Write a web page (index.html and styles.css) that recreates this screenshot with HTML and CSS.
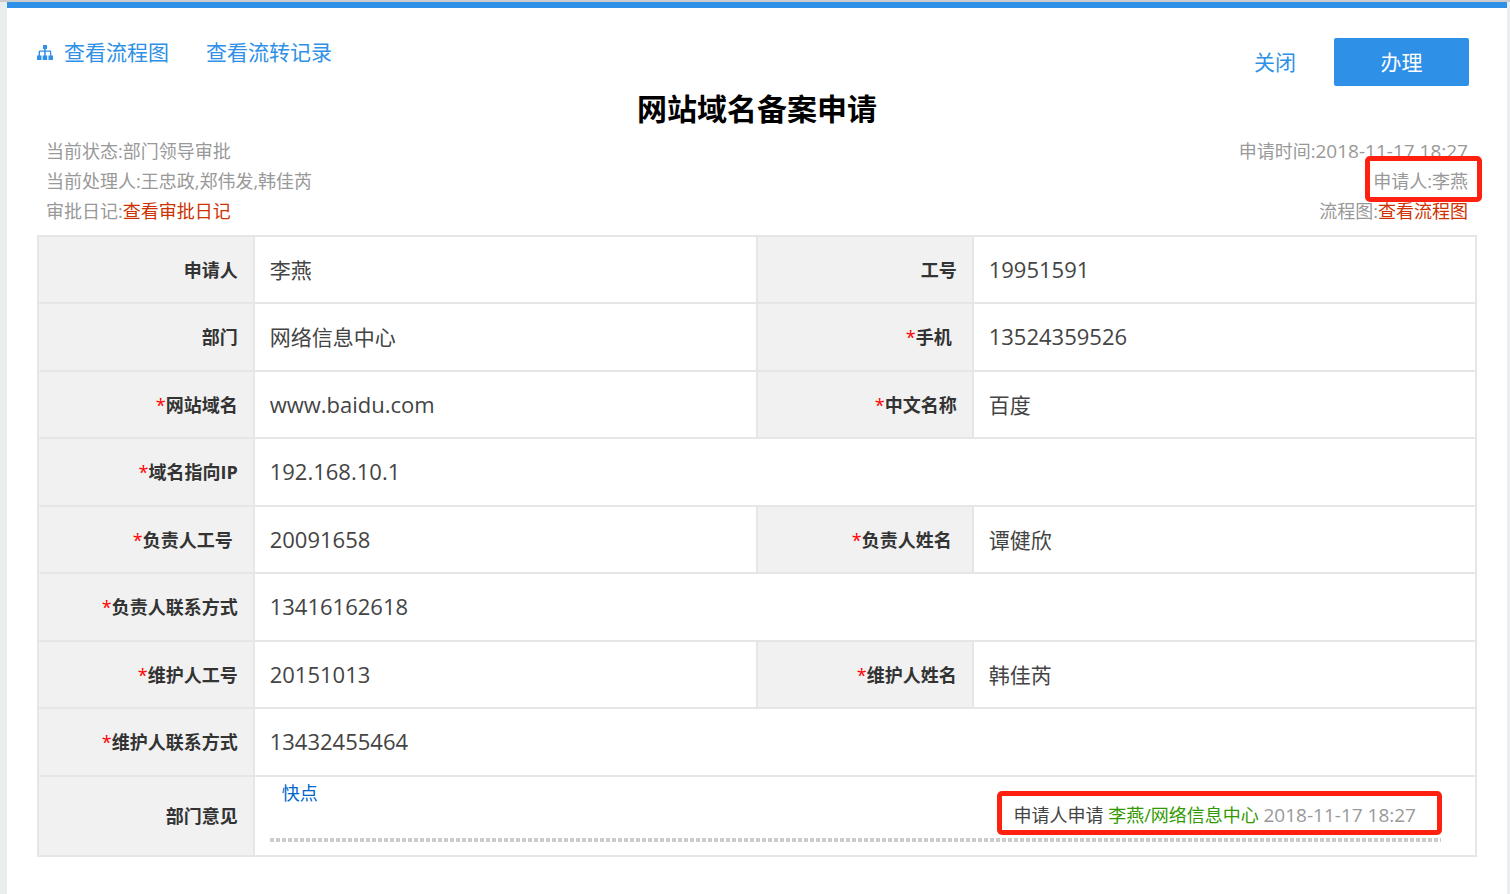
FILE: index.html
```html
<!DOCTYPE html>
<html lang="zh-CN">
<head>
<meta charset="utf-8">
<title>网站域名备案申请</title>
<link rel="stylesheet" href="styles.css">
</head>
<body>
<main class="page">
  <header class="toolbar">
    <nav class="links">
      <a class="link" href="#chart"><svg class="icon" viewBox="0 0 16 16" width="16" height="16" fill="currentColor" aria-hidden="true"><path d="M6 1h4v4H8.700v1.500H13q1.300 0 1.300 1.300V11.500H16V16h-4.500v-4.500h1.500V7.800H8.700v3.700h1.500V16H5.700v-4.500h1.500V7.800H3v3.700h1.500V16H0v-4.500h1.600V7.800q0-1.300 1.400-1.300h4.200V5H6z"/></svg>查看流程图</a>
      <a class="link" href="#records">查看流转记录</a>
    </nav>
    <div class="actions">
      <a class="link" href="#close">关闭</a>
      <button class="primary" type="button">办理</button>
    </div>
  </header>
  <h1 class="title">网站域名备案申请</h1>
  <section class="meta">
    <div>
      <p class="meta-line">当前状态:部门领导审批</p>
      <p class="meta-line">当前处理人:王忠政,郑伟发,韩佳芮</p>
      <p class="meta-line">审批日记:<a class="red-link" href="#log">查看审批日记</a></p>
    </div>
    <div class="meta-right">
      <p class="meta-line">申请时间:<time class="date">2018-11-17 18:27</time></p>
      <p class="meta-line"><span class="marked marked-small">申请人:李燕</span></p>
      <p class="meta-line">流程图:<a class="red-link" href="#flow">查看流程图</a></p>
    </div>
  </section>
  <table class="form">
    <colgroup><col class="col-label"><col class="col-value"><col class="col-label"><col class="col-value"></colgroup>
    <tbody>
      <tr><th scope="row">申请人</th><td>李燕</td><th scope="row">工号</th><td class="latin">19951591</td></tr>
      <tr><th scope="row">部门</th><td>网络信息中心</td><th scope="row" class="spaced"><i class="req">*</i>手机</th><td class="latin">13524359526</td></tr>
      <tr><th scope="row"><i class="req">*</i>网站域名</th><td class="latin">www.baidu.com</td><th scope="row"><i class="req">*</i>中文名称</th><td>百度</td></tr>
      <tr><th scope="row"><i class="req">*</i>域名指向IP</th><td class="latin" colspan="3">192.168.10.1</td></tr>
      <tr><th scope="row" class="spaced"><i class="req">*</i>负责人工号</th><td class="latin">20091658</td><th scope="row" class="spaced"><i class="req">*</i>负责人姓名</th><td>谭健欣</td></tr>
      <tr><th scope="row"><i class="req">*</i>负责人联系方式</th><td class="latin" colspan="3">13416162618</td></tr>
      <tr><th scope="row"><i class="req">*</i>维护人工号</th><td class="latin">20151013</td><th scope="row"><i class="req">*</i>维护人姓名</th><td>韩佳芮</td></tr>
      <tr><th scope="row"><i class="req">*</i>维护人联系方式</th><td class="latin" colspan="3">13432455464</td></tr>
      <tr class="opinion-row"><th scope="row">部门意见</th><td class="opinion" colspan="3">
        <p class="comment">快点</p>
        <p class="sign"><span class="marked marked-wide">申请人申请 <span class="who">李燕/网络信息中心</span> <time class="date">2018-11-17 18:27</time></span></p>
        <div class="dots"></div>
      </td></tr>
    </tbody>
  </table>
</main>
</body>
</html>
```
FILE: styles.css
```css
* { box-sizing: border-box; }
body {
  margin: 0;
  border-top: 2px solid #ccc;
  background: #eaeeef;
  color: #444;
  font-family: "Open Sans", "Noto Sans CJK SC", sans-serif;
  font-size: 21px;
}
p, h1 { margin: 0; }
a { text-decoration: none; }
.page {
  min-height: calc(100vh - 2px);
  margin: 0 3px 0 7px;
  padding: 30px 30px 36px;
  border-top: 6px solid #2e90e6;
  background: #fff;
}
.toolbar {
  display: flex;
  justify-content: space-between;
  align-items: flex-start;
  padding-right: 8px;
}
.links { display: flex; gap: 37px; }
.link { display: flex; align-items: center; gap: 11px; color: #2e90e6; line-height: 28px; }
.actions { display: flex; align-items: center; gap: 38px; }
.primary {
  width: 135px;
  height: 48px;
  padding: 0 0 2px;
  border: 0;
  border-radius: 2px;
  background: #2e90e6;
  color: #fff;
  font: inherit;
}
.title { color: #000; font-size: 30px; line-height: 46px; text-align: center; }
.meta {
  display: flex;
  justify-content: space-between;
  padding: 4px 9px 9px 9px;
  color: #999;
  font-size: 18px;
}
.meta-right { text-align: right; }
.meta-line { line-height: 30px; }
.red-link { color: #c30; }
.date { color: #999; font-size: 19px; }
.marked { position: relative; }
.marked::after {
  content: "";
  position: absolute;
  border: 5px solid #ff2010;
  border-radius: 5px;
}
.marked-small::after { inset: -13px -14px -9px -8px; }
.marked-wide::after { inset: -12px -26px -8px -16px; }
.form { width: 100%; border-collapse: collapse; table-layout: fixed; }
.col-label { width: 15%; }
.col-value { width: 35%; }
.form tr { height: 67px; }
.form tr:nth-child(even) { height: 68px; }
.form th, .form td { padding: 0 15px; border: 2px solid #e6e6e6; line-height: 30px; }
.form th { background: #f1f1f1; color: #333; font-size: 18px; text-align: right; }
.form th.spaced { padding-right: 20px; }
.req { color: #f00; font-style: normal; font-weight: 400; }
.form .latin { padding-bottom: 2px; font-size: 22px; }
.form .opinion-row { height: 80px; }
.form .opinion { padding: 0 34px 13px 15px; font-size: 18px; vertical-align: bottom; }
.comment { padding-left: 12px; color: #06c; line-height: 22px; }
.sign { padding-right: 25px; line-height: 22px; text-align: right; }
.who { color: #390; }
.dots {
  height: 4px;
  margin-top: 12px;
  background: repeating-linear-gradient(90deg, #ccc 0 4px, transparent 4px 6px);
}
```
